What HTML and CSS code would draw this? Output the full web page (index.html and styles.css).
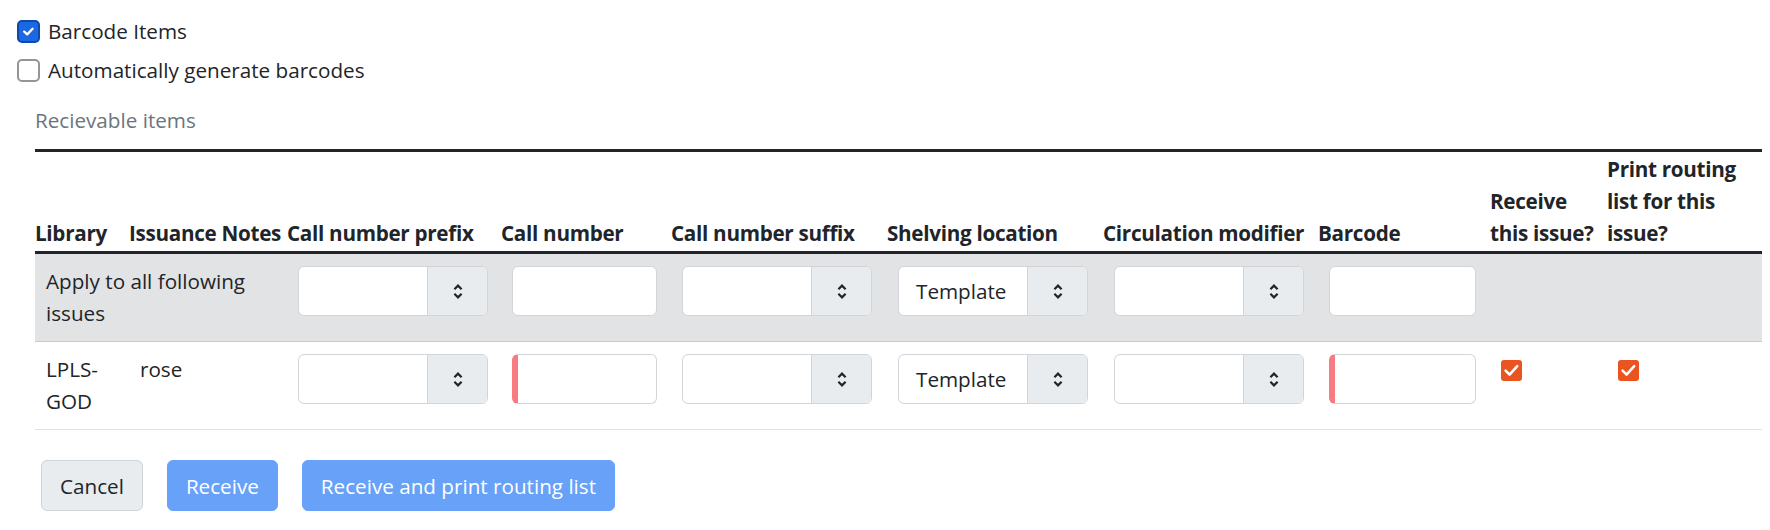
FILE: index.html
```html
<!DOCTYPE html>
<html lang="en">
<head>
<meta charset="utf-8">
<title>Receive items</title>
<link rel="stylesheet" href="styles.css">
</head>
<body>
<div class="page">
  <div class="checks">
    <label class="check">
      <span class="box box-on"><svg width="19" height="19" viewBox="0 0 19 19"><path d="M5.2 9.6 L8.2 12.4 L13.6 6.8" fill="none" stroke="#fff" stroke-width="2.3" stroke-linecap="round" stroke-linejoin="round"/></svg></span>
      <span>Barcode Items</span>
    </label>
    <label class="check">
      <span class="box"></span>
      <span>Automatically generate barcodes</span>
    </label>
  </div>

  <div class="items">
    <div class="items-title">Recievable items</div>
    <table class="grid">
      <colgroup>
        <col class="c-lib"><col class="c-notes"><col class="c-prefix"><col class="c-callno"><col class="c-suffix">
        <col class="c-shelf"><col class="c-circ"><col class="c-barcode"><col class="c-recv"><col class="c-print">
      </colgroup>
      <thead>
        <tr>
          <th>Library</th>
          <th>Issuance Notes</th>
          <th>Call number prefix</th>
          <th>Call number</th>
          <th>Call number suffix</th>
          <th>Shelving location</th>
          <th>Circulation modifier</th>
          <th>Barcode</th>
          <th class="wrap">Receive this issue?</th>
          <th class="wrap">Print routing list for this issue?</th>
        </tr>
      </thead>
      <tbody>
        <tr class="row-apply">
          <td colspan="2">Apply to all following issues</td>
          <td><div class="combo"><span class="combo-val"></span><span class="combo-btn"><svg width="10" height="17" viewBox="0 0 10 17"><path d="M1.4 6.2 L5 2.6 L8.6 6.2 M1.4 10.8 L5 14.4 L8.6 10.8" fill="none" stroke="#212529" stroke-width="2.2"/></svg></span></div></td>
          <td><div class="field"></div></td>
          <td><div class="combo"><span class="combo-val"></span><span class="combo-btn"><svg width="10" height="17" viewBox="0 0 10 17"><path d="M1.4 6.2 L5 2.6 L8.6 6.2 M1.4 10.8 L5 14.4 L8.6 10.8" fill="none" stroke="#212529" stroke-width="2.2"/></svg></span></div></td>
          <td><div class="combo"><span class="combo-val">Template</span><span class="combo-btn"><svg width="10" height="17" viewBox="0 0 10 17"><path d="M1.4 6.2 L5 2.6 L8.6 6.2 M1.4 10.8 L5 14.4 L8.6 10.8" fill="none" stroke="#212529" stroke-width="2.2"/></svg></span></div></td>
          <td><div class="combo"><span class="combo-val"></span><span class="combo-btn"><svg width="10" height="17" viewBox="0 0 10 17"><path d="M1.4 6.2 L5 2.6 L8.6 6.2 M1.4 10.8 L5 14.4 L8.6 10.8" fill="none" stroke="#212529" stroke-width="2.2"/></svg></span></div></td>
          <td><div class="field field-wide"></div></td>
          <td></td>
          <td></td>
        </tr>
        <tr class="row-item">
          <td>LPLS-GOD</td>
          <td>rose</td>
          <td><div class="combo"><span class="combo-val"></span><span class="combo-btn"><svg width="10" height="17" viewBox="0 0 10 17"><path d="M1.4 6.2 L5 2.6 L8.6 6.2 M1.4 10.8 L5 14.4 L8.6 10.8" fill="none" stroke="#212529" stroke-width="2.2"/></svg></span></div></td>
          <td><div class="field invalid"></div></td>
          <td><div class="combo"><span class="combo-val"></span><span class="combo-btn"><svg width="10" height="17" viewBox="0 0 10 17"><path d="M1.4 6.2 L5 2.6 L8.6 6.2 M1.4 10.8 L5 14.4 L8.6 10.8" fill="none" stroke="#212529" stroke-width="2.2"/></svg></span></div></td>
          <td><div class="combo"><span class="combo-val">Template</span><span class="combo-btn"><svg width="10" height="17" viewBox="0 0 10 17"><path d="M1.4 6.2 L5 2.6 L8.6 6.2 M1.4 10.8 L5 14.4 L8.6 10.8" fill="none" stroke="#212529" stroke-width="2.2"/></svg></span></div></td>
          <td><div class="combo"><span class="combo-val"></span><span class="combo-btn"><svg width="10" height="17" viewBox="0 0 10 17"><path d="M1.4 6.2 L5 2.6 L8.6 6.2 M1.4 10.8 L5 14.4 L8.6 10.8" fill="none" stroke="#212529" stroke-width="2.2"/></svg></span></div></td>
          <td><div class="field field-wide invalid"></div></td>
          <td><span class="tick"><svg width="21" height="21" viewBox="0 0 21 21"><path d="M4.6 10.6 L8.6 14.6 L16.2 6.2" fill="none" stroke="#fff" stroke-width="2.6" stroke-linecap="round" stroke-linejoin="round"/></svg></span></td>
          <td><span class="tick"><svg width="21" height="21" viewBox="0 0 21 21"><path d="M4.6 10.6 L8.6 14.6 L16.2 6.2" fill="none" stroke="#fff" stroke-width="2.6" stroke-linecap="round" stroke-linejoin="round"/></svg></span></td>
        </tr>
      </tbody>
    </table>
  </div>

  <div class="actions">
    <button class="btn btn-cancel" type="button">Cancel</button>
    <button class="btn btn-primary" type="button" disabled>Receive</button>
    <button class="btn btn-primary" type="button" disabled>Receive and print routing list</button>
  </div>
</div>
</body>
</html>
```

FILE: styles.css
```css
* {
  box-sizing: border-box;
}

body {
  margin: 0;
  font-family: "Open Sans", "Liberation Sans", sans-serif;
  font-size: 20.67px;
  line-height: 32px;
  color: #212529;
  background: #fff;
}

/* top checkboxes */
.checks {
  display: flex;
  flex-direction: column;
  gap: 7px;
  padding: 15px 0 0 17px;
}

.check {
  display: flex;
  align-items: center;
  gap: 8px;
  height: 32px;
}

.box {
  width: 23px;
  height: 23px;
  flex: none;
  border: 2px solid #959595;
  border-radius: 5px;
  background: #fff;
  display: flex;
  align-items: center;
  justify-content: center;
}

.box-on {
  background: #1b68e2;
  border-color: #0b4aae;
}

/* items table */
.items {
  margin-top: 18px;
  padding: 0 8px 0 35px;
}

.items-title {
  color: #6c757d;
  margin-bottom: 13px;
}

.grid {
  width: 100%;
  border-collapse: collapse;
  table-layout: fixed;
}

.c-lib { width: 94px; }
.c-notes { width: 158px; }
.c-prefix { width: 214px; }
.c-callno { width: 170px; }
.c-suffix { width: 216px; }
.c-shelf { width: 216px; }
.c-circ { width: 215px; }
.c-barcode { width: 172px; }
.c-recv { width: 117px; }
.c-print { width: 155px; }

.grid th {
  text-align: left;
  vertical-align: bottom;
  font-weight: 700;
  letter-spacing: -0.3px;
  padding: 1px 0 2px 0;
  white-space: nowrap;
  border-top: 3px solid #212529;
  border-bottom: 3px solid #212529;
}

.grid th.wrap {
  white-space: normal;
}

.grid td {
  vertical-align: top;
  padding: 11px 11px 12px;
}

.row-apply td {
  background: #e2e3e5;
  border-bottom: 1px solid #c8c9cc;
}

.row-item td {
  border-bottom: 1px solid #dee2e6;
}

/* form controls */
.combo {
  display: flex;
  width: 190px;
  height: 50px;
  margin-top: 1px;
  border: 1px solid #d1d5da;
  border-radius: 6px;
  overflow: hidden;
  background: #fff;
}

.combo-val {
  flex: 1;
  display: flex;
  align-items: center;
  padding-left: 17px;
  white-space: nowrap;
}

.combo-btn {
  width: 60px;
  flex: none;
  display: flex;
  align-items: center;
  justify-content: center;
  background: #e9ecef;
  border-left: 1px solid #d1d5da;
}

.field {
  width: 145px;
  height: 50px;
  margin-top: 1px;
  border: 1px solid #d1d5da;
  border-radius: 6px;
  background: #fff;
}

.field-wide {
  width: 147px;
}

.invalid {
  border-left: 6px solid #f77b80;
}

.tick {
  display: flex;
  width: 21px;
  height: 21px;
  margin-top: 7px;
  border-radius: 3px;
  background: #e95420;
}

/* buttons */
.actions {
  display: flex;
  gap: 24px;
  padding: 30px 0 0 41px;
}

.btn {
  height: 51px;
  padding: 0 18px;
  border: 1px solid transparent;
  border-radius: 6px;
  font: inherit;
  line-height: 32px;
  cursor: pointer;
}

.btn-cancel {
  background: #e9ecef;
  border-color: #ced4da;
  color: #212529;
}

.btn-primary {
  background: #67a1f8;
  border-color: #67a1f8;
  color: #fff;
}
```
